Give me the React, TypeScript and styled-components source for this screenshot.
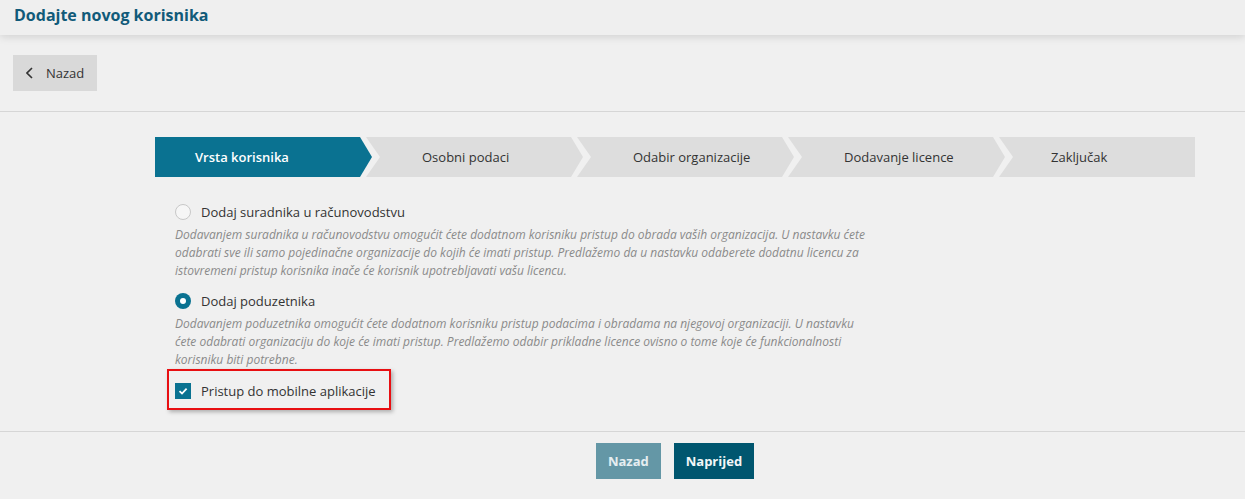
import * as React from 'react'
import styled, {createGlobalStyle, css} from 'styled-components'

const GlobalStyle = createGlobalStyle`
  html, body {
    margin: 0;
    padding: 0;
    background: #f0f0f0;
    font-family: 'Open Sans', 'DejaVu Sans', sans-serif;
    color: #333;
  }
  * {
    box-sizing: border-box;
  }
`

const teal = '#0a7291'

const Page = styled.div`
  min-height: 499px;
  background: #f0f0f0;
`

const Header = styled.header`
  height: 35px;
  display: flex;
  align-items: center;
  padding: 0 14px;
  background: #efefef;
  box-shadow: 0 2px 8px rgba(0, 0, 0, 0.13);
  position: relative;
`

const Title = styled.h1`
  margin: 0;
  font-size: 16px;
  font-weight: 700;
  color: #115a79;
  line-height: 1;
  transform: translateY(-3px);
`

const Toolbar = styled.div`
  padding: 20px 13px;
  border-bottom: 1px solid #d6d6d6;
`

const BackButton = styled.button`
  display: inline-flex;
  align-items: center;
  gap: 13px;
  height: 36px;
  padding: 0 13px;
  border: none;
  background: #d9d9d9;
  font-family: inherit;
  font-size: 13px;
  color: #333;
  cursor: pointer;

  svg {
    display: block;
  }
`

const Content = styled.main`
  padding: 25px 50px 0 155px;
`

const Steps = styled.ol`
  display: flex;
  margin: 0;
  padding: 0;
  list-style: none;
  height: 40px;
`

interface StepProps {
  $active?: boolean
  $first?: boolean
  $last?: boolean
}

const Step = styled.li<StepProps>`
  display: flex;
  align-items: center;
  height: 40px;
  font-size: 13px;
  background: ${_ => (_.$active ? teal : '#dddddd')};
  color: ${_ => (_.$active ? '#fff' : '#333')};
  font-weight: ${_ => (_.$active ? 600 : 400)};
  padding-left: ${_ => (_.$first ? '40px' : '56px')};
  width: 217px;
  flex: none;
  margin-left: ${_ => (_.$first ? '0' : '-6px')};
  clip-path: polygon(
    0 0,
    calc(100% - 12px) 0,
    100% 50%,
    calc(100% - 12px) 100%,
    0 100%,
    14px 50%
  );

  ${_ =>
    _.$first &&
    css`
      clip-path: polygon(
        0 0,
        calc(100% - 12px) 0,
        100% 50%,
        calc(100% - 12px) 100%,
        0 100%
      );
    `}

  ${_ =>
    _.$last &&
    css`
      flex: 1;
      width: auto;
      padding-left: 52px;
      clip-path: polygon(0 0, 100% 0, 100% 100%, 0 100%, 14px 50%);
    `}
`

const Options = styled.div`
  padding: 25px 0 0 20px;
`

const OptionRow = styled.label<{$gap?: number}>`
  display: flex;
  align-items: center;
  gap: 10px;
  height: 20px;
  font-size: 13px;
  color: #333;
  margin-top: ${_ => _.$gap ?? 0}px;
  cursor: pointer;
`

const Radio = styled.span<{$checked?: boolean}>`
  width: 16px;
  height: 16px;
  border-radius: 50%;
  flex: none;
  display: flex;
  align-items: center;
  justify-content: center;
  ${_ =>
    _.$checked
      ? css`
          background: ${teal};
          &::after {
            content: '';
            width: 6px;
            height: 6px;
            border-radius: 50%;
            background: #fff;
          }
        `
      : css`
          background: #f6f6f6;
          border: 1px solid #c8c8c8;
        `}
`

const Description = styled.p`
  margin: 4px 0 0;
  max-width: 700px;
  font-size: 12px;
  line-height: 18px;
  font-style: italic;
  color: #8a8a8a;
`

const Highlight = styled.div`
  display: inline-block;
  margin-left: -8px;
  padding: 10px 13px 7px 6px;
  border: 2px solid #e80f12;
  box-shadow: 2px 2px 4px rgba(0, 0, 0, 0.28);
`

const Checkbox = styled.span`
  width: 16px;
  height: 16px;
  flex: none;
  display: flex;
  align-items: center;
  justify-content: center;
  background: ${teal};

  svg {
    display: block;
  }
`

const Footer = styled.footer`
  margin-top: 21px;
  border-top: 1px solid #d6d6d6;
  padding: 11px 50px 20px 155px;
  display: flex;
  justify-content: center;
  gap: 13px;
`

const ActionButton = styled.button<{$primary?: boolean}>`
  height: 36px;
  padding: 0 12px;
  border: none;
  font-family: inherit;
  font-size: 13px;
  font-weight: 700;
  color: ${_ => (_.$primary ? '#f2f6f8' : '#e6eef1')};
  background: ${_ => (_.$primary ? '#00566f' : '#6497a6')};
  cursor: pointer;
`

const steps = [
  'Vrsta korisnika',
  'Osobni podaci',
  'Odabir organizacije',
  'Dodavanje licence',
  'Zaključak'
]

export default function App() {
  return (
    <Page>
      <GlobalStyle />
      <Header>
        <Title>Dodajte novog korisnika</Title>
      </Header>
      <Toolbar>
        <BackButton>
          <svg width="7" height="12" viewBox="0 0 7 12">
            <path
              d="M6 1 1 6l5 5"
              fill="none"
              stroke="#333"
              strokeWidth="1.6"
            />
          </svg>
          Nazad
        </BackButton>
      </Toolbar>
      <Content>
        <Steps>
          {steps.map((s, i) => (
            <Step
              key={s}
              $active={i === 0}
              $first={i === 0}
              $last={i === steps.length - 1}
            >
              {s}
            </Step>
          ))}
        </Steps>
        <Options>
          <OptionRow>
            <Radio />
            Dodaj suradnika u računovodstvu
          </OptionRow>
          <Description>
            Dodavanjem suradnika u računovodstvu omogućit ćete dodatnom
            korisniku pristup do obrada vaših organizacija. U nastavku ćete
            odabrati sve ili samo pojedinačne organizacije do kojih će imati
            pristup. Predlažemo da u nastavku odaberete dodatnu licencu za
            istovremeni pristup korisnika inače će korisnik upotrebljavati vašu
            licencu.
          </Description>
          <OptionRow $gap={11}>
            <Radio $checked />
            Dodaj poduzetnika
          </OptionRow>
          <Description>
            Dodavanjem poduzetnika omogućit ćete dodatnom korisniku pristup
            podacima i obradama na njegovoj organizaciji. U nastavku ćete
            odabrati organizaciju do koje će imati pristup. Predlažemo odabir
            prikladne licence ovisno o tome koje će funkcionalnosti korisniku
            biti potrebne.
          </Description>
          <Highlight>
            <OptionRow>
              <Checkbox>
                <svg width="10" height="8" viewBox="0 0 10 8">
                  <path
                    d="M1.5 4.2 4 6.5 8.6 1.6"
                    fill="none"
                    stroke="#fff"
                    strokeWidth="1.8"
                  />
                </svg>
              </Checkbox>
              Pristup do mobilne aplikacije
            </OptionRow>
          </Highlight>
        </Options>
      </Content>
      <Footer>
        <ActionButton>Nazad</ActionButton>
        <ActionButton $primary>Naprijed</ActionButton>
      </Footer>
    </Page>
  )
}
